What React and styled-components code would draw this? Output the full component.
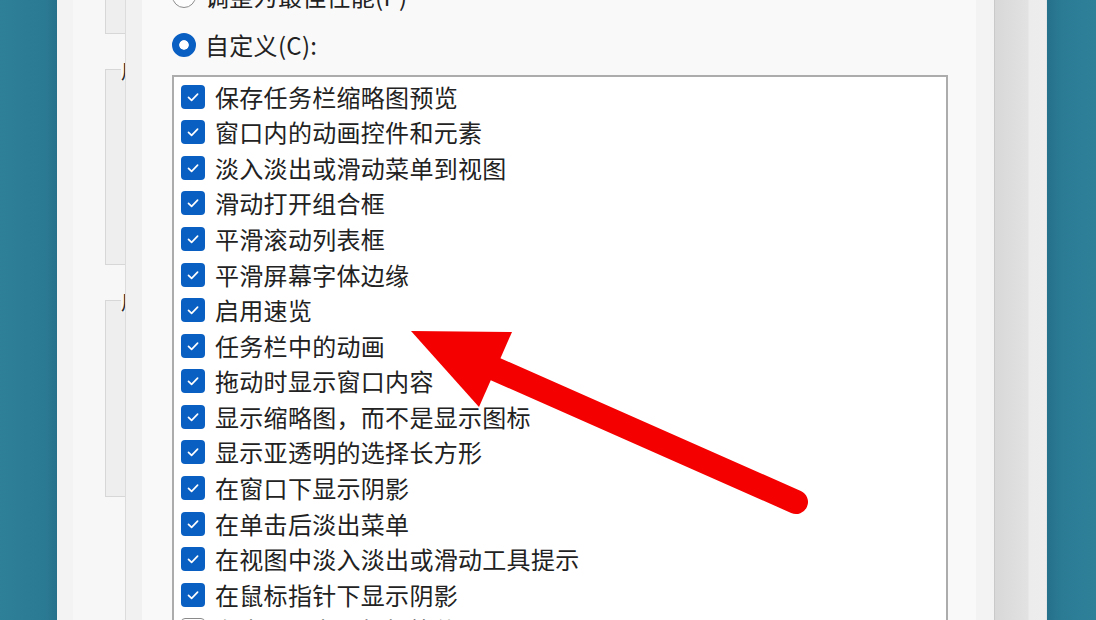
import React from 'react';
import styled, {createGlobalStyle} from 'styled-components';

const items = [
    {label: '保存任务栏缩略图预览', on: true},
    {label: '窗口内的动画控件和元素', on: true},
    {label: '淡入淡出或滑动菜单到视图', on: true},
    {label: '滑动打开组合框', on: true},
    {label: '平滑滚动列表框', on: true},
    {label: '平滑屏幕字体边缘', on: true},
    {label: '启用速览', on: true},
    {label: '任务栏中的动画', on: true},
    {label: '拖动时显示窗口内容', on: true},
    {label: '显示缩略图，而不是显示图标', on: true},
    {label: '显示亚透明的选择长方形', on: true},
    {label: '在窗口下显示阴影', on: true},
    {label: '在单击后淡出菜单', on: true},
    {label: '在视图中淡入淡出或滑动工具提示', on: true},
    {label: '在鼠标指针下显示阴影', on: true},
    {label: '在桌面上为图标标签使用阴影', on: false},
];

function App() {
    return (
        <>
            <GlobalStyle/>
            <Page>
                <Desktop side="left"/>
                <BackLeft>
                    <Strip width={16} tone="#f3f3f3"/>
                    <Strip width={32} tone="#f7f7f7"/>
                    <GroupColumn>
                        <Group height={44} style={{marginTop: -10}}/>
                        <Group height={196}><Legend>用户</Legend></Group>
                        <Group height={197}><Legend>用户</Legend></Group>
                    </GroupColumn>
                </BackLeft>
                <Dialog>
                    <Options>
                        <RadioRow>
                            <Radio/>
                            <Label>调整为最佳性能(P)</Label>
                        </RadioRow>
                        <RadioRow>
                            <Radio checked/>
                            <Label>自定义(C):</Label>
                        </RadioRow>
                        <ListBox>
                            {items.map(item => (
                                <Row key={item.label}>
                                    <Check on={item.on}>
                                        {item.on && (
                                            <svg width="24" height="24" viewBox="0 0 24 24">
                                                <path d="M7.5 12.3 L10.6 15.3 L16.6 9.2" fill="none" stroke="#fff" strokeWidth="1.7" strokeLinecap="round" strokeLinejoin="round"/>
                                            </svg>
                                        )}
                                    </Check>
                                    <Label>{item.label}</Label>
                                </Row>
                            ))}
                        </ListBox>
                    </Options>
                </Dialog>
                <BackRight/>
                <Desktop side="right"/>
                <Arrow width="1096" height="620" viewBox="0 0 1096 620">
                    <line x1="796" y1="502" x2="486" y2="365" stroke="#f40000" strokeWidth="24" strokeLinecap="round"/>
                    <polygon points="411,331 512,332 479,407" fill="#f40000"/>
                </Arrow>
            </Page>
        </>
    )
}

const GlobalStyle = createGlobalStyle`
    html, body {
        margin: 0;
        padding: 0;
        overflow: hidden;
    }
    body {
        font-family: "Noto Sans CJK SC", "Noto Sans", sans-serif;
    }
`

const Page = styled.div`
    position: relative;
    display: flex;
    width: 1096px;
    height: 620px;
    overflow: hidden;
    background: #f7f7f7;
`

const Desktop = styled.div`
    width: ${p => p.side === 'left' ? '57px' : 'auto'};
    flex: ${p => p.side === 'left' ? 'none' : '1'};
    background: ${p => p.side === 'left'
        ? 'linear-gradient(to right, #2e7f98, #2b7a93 80%, #26708a)'
        : 'linear-gradient(to right, #25708a, #2b7b95 30%, #2e8099)'};
`

const BackLeft = styled.div`
    display: flex;
    width: 68px;
    flex: none;
    overflow: hidden;
`

const Strip = styled.div`
    width: ${p => p.width}px;
    flex: none;
    background: ${p => p.tone};
`

const GroupColumn = styled.div`
    flex: 1;
    display: flex;
    flex-direction: column;
    gap: 35px;
    background: #f7f7f7;
`

const Group = styled.div`
    position: relative;
    height: ${p => p.height}px;
    width: 60px;
    flex: none;
    box-sizing: border-box;
    border: 1px solid #d7d7d7;
    background: #eeeeee;
`

const Legend = styled.span`
    position: absolute;
    top: -9px;
    left: 15px;
    font-size: 20px;
    line-height: 20px;
    color: #2a2a2a;
    background: #f7f7f7;
`

const Dialog = styled.div`
    width: 870px;
    flex: none;
    box-sizing: border-box;
    border-left: 1px solid #dcdcdc;
    border-right: 1px solid #c9c9c9;
    background: linear-gradient(to right,
        #f1f1f1 0 16px, #f9f9f9 16px calc(100% - 18px),
        #f3f3f3 calc(100% - 18px));
    padding: 0 46px 0 46px;
`

const Options = styled.div`
    display: flex;
    flex-direction: column;
    margin-top: -22px;
`

const RadioRow = styled.div`
    display: flex;
    align-items: center;
    gap: 9px;
    height: 36px;
    margin-bottom: 13px;

    &:nth-of-type(2) {
        margin-bottom: 12px;
    }
`

const Radio = styled.span`
    width: 24px;
    height: 24px;
    flex: none;
    box-sizing: border-box;
    border-radius: 50%;
    ${p => p.checked
        ? 'background: #0a5fc2; border: 7px solid #0a5fc2; box-shadow: inset 0 0 0 6px #fff;'
        : 'background: #fdfdfd; border: 1.5px solid #8c8c8c;'}
`

const Label = styled.span`
    font-size: 24px;
    line-height: 30px;
    color: #222;
    white-space: nowrap;
    letter-spacing: 0.3px;
`

const ListBox = styled.div`
    width: 776px;
    box-sizing: border-box;
    border: 2px solid #acacac;
    border-bottom: none;
    background: #fff;
    padding: 2px 0 0 7px;
    display: flex;
    flex-direction: column;
`

const Row = styled.div`
    display: flex;
    align-items: center;
    gap: 10px;
    height: 35.57px;
`

const Check = styled.span`
    width: 24px;
    height: 24px;
    flex: none;
    box-sizing: border-box;
    border-radius: 4px;
    display: flex;
    align-items: center;
    justify-content: center;
    background: ${p => p.on ? '#0a5fc2' : '#fff'};
    border: ${p => p.on ? 'none' : '1.5px solid #8a8a8a'};
`

const BackRight = styled.div`
    width: 52px;
    flex: none;
    background: linear-gradient(to right,
        #d8d8d8 0, #e2e2e2 33px, #ececec 34px, #ededed 51px, #dcdcdc 52px);
`

const Arrow = styled.svg`
    position: absolute;
    left: 0;
    top: 0;
    pointer-events: none;
`

export default App
